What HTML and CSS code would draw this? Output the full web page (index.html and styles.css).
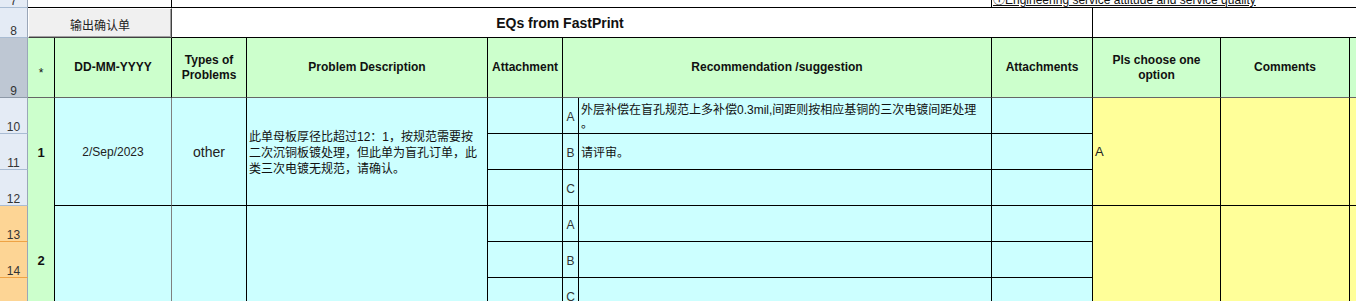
FILE: index.html
```html
<!DOCTYPE html>
<html lang="zh-CN">
<head>
<meta charset="utf-8">
<title>EQs from FastPrint</title>
<link rel="stylesheet" href="styles.css">
</head>
<body>
<div class="sheet">
  <!-- row 7 -->
  <div class="rh k1 r1">7</div>
  <div class="c blank k2 s2 r1"></div>
  <div class="c blank k4 s5 r1"></div>
  <div class="c note k9 s4 r1"><span>①Engineering service attitude and service quality</span></div>

  <!-- row 8 -->
  <div class="rh k1 r2">8</div>
  <div class="c title k2 s8 r2">EQs from FastPrint</div>
  <div class="c blank open k10 s3 r2"></div>
  <div class="btn k2 s2 r2">输出确认单</div>

  <!-- row 9 : headers -->
  <div class="rh sel k1 r3">9</div>
  <div class="c hd asterisk k2 r3">*</div>
  <div class="c hd k3 r3">DD-MM-YYYY</div>
  <div class="c hd k4 r3">Types of<br>Problems</div>
  <div class="c hd k5 r3">Problem Description</div>
  <div class="c hd k6 r3">Attachment</div>
  <div class="c hd k7 s2 r3">Recommendation /suggestion</div>
  <div class="c hd k9 r3">Attachments</div>
  <div class="c hd k10 r3">Pls choose one<br>option</div>
  <div class="c hd k11 r3">Comments</div>
  <div class="c hd open k12 r3"></div>

  <!-- rows 10-12 : item 1 -->
  <div class="rh k1 r4">10</div>
  <div class="rh k1 r5">11</div>
  <div class="rh k1 r6">12</div>
  <div class="c star k2 r4 rs3">1</div>
  <div class="c date k3 r4 rs3">2/Sep/2023</div>
  <div class="c type k4 r4 rs3">other</div>
  <div class="c prob k5 r4 rs3">此单母板厚径比超过12：1，按规范需要按<br>二次沉铜板镀处理，但此单为盲孔订单，此<br>类三次电镀无规范，请确认。</div>
  <div class="c k6 r4"></div>
  <div class="c k6 r5"></div>
  <div class="c k6 r6"></div>
  <div class="c letter k7 r4">A</div>
  <div class="c letter k7 r5">B</div>
  <div class="c letter k7 r6">C</div>
  <div class="c rec k8 r4">外层补偿在盲孔规范上多补偿0.3mil,间距则按相应基铜的三次电镀间距处理<br>。</div>
  <div class="c rec k8 r5">请评审。</div>
  <div class="c rec k8 r6"></div>
  <div class="c k9 r4"></div>
  <div class="c k9 r5"></div>
  <div class="c k9 r6"></div>
  <div class="c pick k10 r4 rs3">A</div>
  <div class="c note-y k11 r4 rs3"></div>
  <div class="c note-y open k12 r4 rs3"></div>

  <!-- rows 13-15 : item 2 -->
  <div class="rh hot k1 r7">13</div>
  <div class="rh hot k1 r8">14</div>
  <div class="rh hot k1 r9">15</div>
  <div class="c star k2 r7 rs3">2</div>
  <div class="c date k3 r7 rs3"></div>
  <div class="c type k4 r7 rs3"></div>
  <div class="c prob k5 r7 rs3"></div>
  <div class="c k6 r7"></div>
  <div class="c k6 r8"></div>
  <div class="c k6 r9"></div>
  <div class="c letter k7 r7">A</div>
  <div class="c letter k7 r8">B</div>
  <div class="c letter k7 r9">C</div>
  <div class="c rec k8 r7"></div>
  <div class="c rec k8 r8"></div>
  <div class="c rec k8 r9"></div>
  <div class="c k9 r7"></div>
  <div class="c k9 r8"></div>
  <div class="c k9 r9"></div>
  <div class="c pick k10 r7 rs3"></div>
  <div class="c note-y k11 r7 rs3"></div>
  <div class="c note-y open k12 r7 rs3"></div>
</div>
</body>
</html>
```
FILE: styles.css
```css
* { box-sizing: border-box; }

body {
  margin: 0;
  background: #fff;
  font-family: "Liberation Sans", "Noto Sans CJK SC", sans-serif;
  color: #111;
}

.sheet {
  display: grid;
  grid-template-columns: 28px 27px 117px 75px 241px 75px 16px 413px 101px 128px 129px 60px;
  grid-template-rows: 8px 30px 60px repeat(6, 36px);
  width: 1356px;
  height: 301px;
  overflow: hidden;
}

/* grid placement helpers */
.k1 { grid-column-start: 1; }
.k2 { grid-column-start: 2; }
.k3 { grid-column-start: 3; }
.k4 { grid-column-start: 4; }
.k5 { grid-column-start: 5; }
.k6 { grid-column-start: 6; }
.k7 { grid-column-start: 7; }
.k8 { grid-column-start: 8; }
.k9 { grid-column-start: 9; }
.k10 { grid-column-start: 10; }
.k11 { grid-column-start: 11; }
.k12 { grid-column-start: 12; }
.s2 { grid-column-end: span 2; }
.s3 { grid-column-end: span 3; }
.s4 { grid-column-end: span 4; }
.s5 { grid-column-end: span 5; }
.s8 { grid-column-end: span 8; }
.r1 { grid-row-start: 1; }
.r2 { grid-row-start: 2; }
.r3 { grid-row-start: 3; }
.r4 { grid-row-start: 4; }
.r5 { grid-row-start: 5; }
.r6 { grid-row-start: 6; }
.r7 { grid-row-start: 7; }
.r8 { grid-row-start: 8; }
.r9 { grid-row-start: 9; }
.rs3 { grid-row-end: span 3; }

/* row headers */
.rh {
  background: #e4ebf5;
  border-right: 1px solid #9aa6b8;
  border-bottom: 1px solid #a9bcd3;
  display: flex;
  align-items: flex-end;
  justify-content: center;
  font-size: 12px;
  line-height: 12px;
  color: #333;
  overflow: hidden;
}
.rh.sel { background: #bec7d3; border-bottom-color: #8e99a8; }
.rh.hot { background: #fdd595; border-bottom-color: #eea345; }

/* cells */
.c {
  background: #ccffff;
  border-right: 1px solid #000;
  border-bottom: 1px solid #000;
  display: flex;
  align-items: center;
  justify-content: center;
  text-align: center;
  font-size: 12px;
  color: #111;
  min-width: 0;
}

.blank { background: #fff; }
.open { border-right: none; }

.note {
  background: #fff;
  border-right: none;
  justify-content: flex-start;
  align-items: flex-end;
  padding-left: 1px;
  white-space: nowrap;
  line-height: 14px;
  overflow: visible;
}
.note span { text-decoration: underline; }

.title {
  background: #fff;
  font-weight: bold;
  font-size: 14px;
}

.btn {
  z-index: 1;
  background: #f0f0f0;
  border: 1px solid;
  border-color: #fff #404040 #404040 #fff;
  box-shadow: inset -1px -1px 0 #a0a0a0;
  display: flex;
  align-items: center;
  justify-content: center;
  padding-top: 3px;
  font-size: 12px;
  color: #222;
}

/* header row */
.hd {
  background: #ccffcc;
  border-bottom-color: #666;
  font-weight: bold;
  line-height: 15px;
}
.hd.asterisk { font-weight: normal; padding-top: 12px; }

/* data */
.star {
  background: #ccffcc;
  border-bottom: none;
  font-weight: bold;
  font-size: 13px;
}
.date { border-right-color: #808080; color: #222; }
.type { font-size: 14px; color: #222; }
.prob {
  justify-content: flex-start;
  text-align: left;
  padding: 2px 0 0 2px;
  line-height: 16px;
  white-space: nowrap;
}
.letter { color: #333; padding-top: 3px; }
.rec {
  justify-content: flex-start;
  text-align: left;
  padding: 2px 0 0 2px;
  line-height: 14px;
  white-space: nowrap;
}
.pick {
  background: #ffff99;
  justify-content: flex-start;
  padding-left: 2px;
  font-size: 13px;
  color: #222;
}
.note-y { background: #ffff99; }
```
